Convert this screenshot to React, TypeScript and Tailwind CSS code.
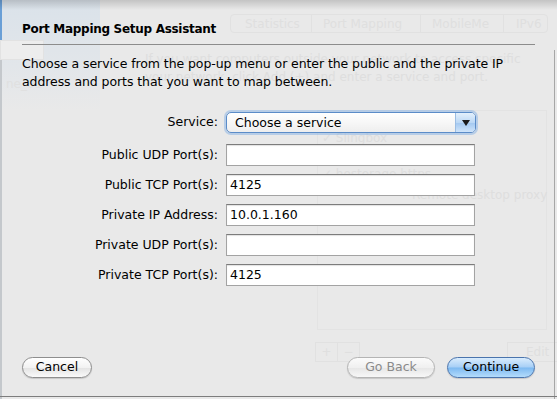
import React from "react";

const fields = [
  { label: "Public UDP Port(s):", value: "" },
  { label: "Public TCP Port(s):", value: "4125" },
  { label: "Private IP Address:", value: "10.0.1.160" },
  { label: "Private UDP Port(s):", value: "" },
  { label: "Private TCP Port(s):", value: "4125" },
];

// faint window that shows through the translucent sheet
function BehindWindow() {
  return (
    <div className="absolute inset-0 text-[12px] text-[#dedede]">
      <div className="absolute left-0 top-0 h-[110px] w-[100px] bg-[linear-gradient(to_bottom,#dae2ea_0%,#e2e6ea_60%,#e9e9e9_100%)]" />
      <div className="absolute left-0 top-0 h-[45px] w-[2px] bg-[#6a9fd6]" />
      <div className="absolute left-0 top-[45px] h-[354px] w-[2px] bg-[#c4c8cc]" />
      <div className="absolute left-0 top-[40px] h-[20px] w-[44px] border border-[#e2e2e2] bg-[#ededed]" />
      <div className="absolute left-[6px] top-[75px] text-[#e0e0e0]">ne_01</div>
      <div className="absolute left-[230px] top-[14px] flex h-[19px] w-[318px] items-center rounded-[4px] border border-[#e1e1e1] text-[#dfdfdf]">
        <span className="w-[80px] pl-[14px]">Statistics</span>
        <span className="h-full w-px bg-[#e1e1e1]" />
        <span className="w-[108px] pl-[11px]">Port Mapping</span>
        <span className="h-full w-px bg-[#e1e1e1]" />
        <span className="w-[82px] pl-[11px]">MobileMe</span>
        <span className="h-full w-px bg-[#e1e1e1]" />
        <span className="pl-[12px]">IPv6</span>
      </div>
      <div className="absolute left-[145px] top-[50px] whitespace-nowrap">If you want computers outside your network to access specific</div>
      <div className="absolute left-[145px] top-[68px] whitespace-nowrap">your network, click Add (+) and enter a service and port.</div>
      <div className="absolute left-[317px] top-[110px] h-[220px] w-[230px] border border-[#e3e3e3]" />
      <div className="absolute left-[322px] top-[129px] whitespace-nowrap">✓ Slingbox</div>
      <div className="absolute left-[322px] top-[165px] whitespace-nowrap">✓ hostorage https</div>
      <div className="absolute left-[412px] top-[186px] whitespace-nowrap">Remote desktop proxy</div>
      <div className="absolute left-[315px] top-[342px] flex h-[20px] w-[45px] border border-[#e1e1e1] text-[#dfdfdf]">
        <span className="flex-1 text-center leading-[18px]">+</span>
        <span className="h-full w-px bg-[#e1e1e1]" />
        <span className="flex-1 text-center leading-[18px]">−</span>
      </div>
      <div className="absolute left-[507px] top-[342px] h-[20px] w-[60px] border border-[#e1e1e1] pl-[18px] leading-[18px] text-[#dfdfdf]">Edit</div>
      <div className="absolute left-[554px] top-[50px] h-[349px] w-px bg-[#a6a6a6]" />
    </div>
  );
}

function AquaButton({ label, kind }: { label: string; kind: "normal" | "disabled" | "default" }) {
  const look =
    kind === "default"
      ? "border-[#4a74ad] bg-[linear-gradient(to_bottom,#d9ecfd_0%,#a7cff6_48%,#7db9f1_52%,#b4dcfb_100%)] text-black"
      : kind === "disabled"
        ? "border-[#b4b4b4] bg-[linear-gradient(to_bottom,#fbfbfb_0%,#f0f0f0_50%,#e6e6e6_52%,#f7f7f7_100%)] text-[#8a8a8a]"
        : "border-[#8e8e8e] bg-[linear-gradient(to_bottom,#ffffff_0%,#f2f2f2_50%,#e3e3e3_52%,#fafafa_100%)] text-black";
  return (
    <div
      className={`flex h-[21px] items-center justify-center rounded-full border text-[12.5px] shadow-[0_1px_1px_rgba(0,0,0,0.15)] ${look} ${
        label === "Cancel" ? "w-[70px]" : "w-[88px]"
      }`}
    >
      {label}
    </div>
  );
}

export default function App() {
  return (
    <div className="relative h-[399px] w-[557px] overflow-hidden bg-[#e9e9e9] font-['DejaVu_Sans',sans-serif] text-black">
      <BehindWindow />

      <div className="relative flex h-full flex-col bg-[linear-gradient(to_bottom,rgba(0,0,0,0.16)_0px,rgba(0,0,0,0)_10px)] px-[22px]">
        <h1 className="mt-[21px] h-[16px] text-[12px] font-bold leading-[16px] tracking-[-0.3px]">Port Mapping Setup Assistant</h1>
        <div className="mt-[7px] h-px w-[513px] bg-[#8c8c8c]" />

        <p className="mt-[10px] whitespace-nowrap text-[12.5px] leading-[18px] tracking-[-0.08px]">
          Choose a service from the pop-up menu or enter the public and the private IP
          <br />
          address and ports that you want to map between.
        </p>

        <div className="mt-[21px] grid grid-cols-[196px_250px] items-center gap-x-[8px] text-[12.5px]">
          <div className="text-right">Service:</div>
          <div className="flex h-[21px] overflow-hidden rounded-[5px] border border-[#5b8cc8] bg-[linear-gradient(to_bottom,#ffffff_0%,#f7f7f7_50%,#eeeeee_100%)] shadow-[0_0_0_2px_rgba(122,170,228,0.45)]">
            <span className="flex-1 pl-[8px] leading-[19px]">Choose a service</span>
            <span className="flex w-[20px] items-center justify-center border-l border-[#9bbde3] bg-[linear-gradient(to_bottom,#e4f0fc_0%,#bcd8f5_50%,#a3c8f0_52%,#cfe4fa_100%)]">
              <svg width="8" height="6" viewBox="0 0 8 6">
                <polygon points="0,0 8,0 4,6" fill="#1a1a1a" />
              </svg>
            </span>
          </div>
        </div>

        <div className="mt-[11px] flex flex-col gap-[8px] text-[12.5px]">
          {fields.map((f) => (
            <div key={f.label} className="grid grid-cols-[196px_249px] items-center gap-x-[8px]">
              <div className="text-right">{f.label}</div>
              <div className="h-[22px] border border-[#a3a3a3] border-t-[#7c7c7c] bg-white pl-[3px] leading-[20px] shadow-[inset_0_1px_1px_rgba(0,0,0,0.12)]">
                {f.value}
              </div>
            </div>
          ))}
        </div>

        <div className="mt-auto mb-[21px] flex items-center">
          <AquaButton label="Cancel" kind="normal" />
          <div className="flex-1" />
          <AquaButton label="Go Back" kind="disabled" />
          <div className="w-[12px]" />
          <AquaButton label="Continue" kind="default" />
        </div>
      </div>

      <div className="absolute bottom-[2px] left-0 h-px w-full bg-[#7d7d7d]" />
    </div>
  );
}
